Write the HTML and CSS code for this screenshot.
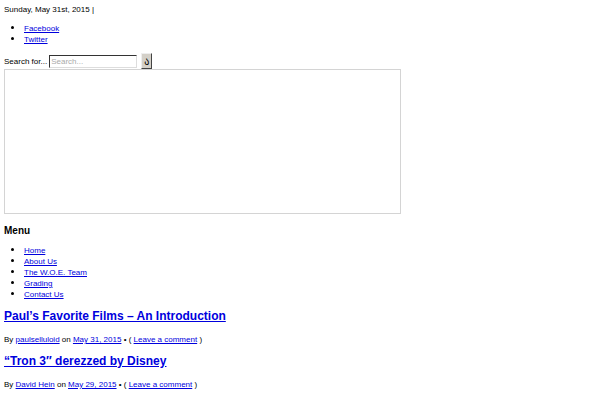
FILE: index.html
```html
<!DOCTYPE html>
<html lang="en">
<head>
  <meta charset="UTF-8"/>
  <title>Film Blog</title>
  <link rel="stylesheet" href="styles.css">
</head>

<body>
<header>
  <div class="date">Sunday, May 31st, 2015 |</div>
  <ul class="links">
    <li><a href="#">Facebook</a></li>
    <li><a href="#">Twitter</a></li>
  </ul>
  <form class="search-form">
    <label for="search">Search for...</label>
    <input class="search-field" id="search" type="text" placeholder="Search..."/>
    <button class="search-btn" type="submit">ა</button>
  </form>
  <div class="banner"></div>
</header>

<nav>
  <h3 class="menu-title">Menu</h3>
  <ul class="links">
    <li><a href="#">Home</a></li>
    <li><a href="#">About Us</a></li>
    <li><a href="#">The W.O.E. Team</a></li>
    <li><a href="#">Grading</a></li>
    <li><a href="#">Contact Us</a></li>
  </ul>
</nav>

<main>
  <article class="post">
    <h2 class="post-title"><a href="#">Paul’s Favorite Films – An Introduction</a></h2>
    <p class="post-meta">By <a href="#">paulselluloid</a> on <a href="#">May 31, 2015</a> • ( <a href="#">Leave a comment</a> )</p>
  </article>
  <article class="post">
    <h2 class="post-title"><a href="#">“Tron 3″ derezzed by Disney</a></h2>
    <p class="post-meta">By <a href="#">David Hein</a> on <a href="#">May 29, 2015</a> • ( <a href="#">Leave a comment</a> )</p>
  </article>
</main>
</body>
</html>
```

FILE: styles.css
```css
* {
  box-sizing: border-box;
}

body {
  background-color: #fff;
  color: #000;
  font-family: "Liberation Sans", Arial, sans-serif;
  font-size: 8px;
  line-height: 11px;
  margin: 4px;
}

a {
  color: #0000dd;
}

.links {
  line-height: 10px;
  margin: 8px 0;
  padding-left: 20px;
}

.links li::marker {
  font-size: 10px;
}

/* search */
.search-form {
  display: flex;
  align-items: center;
  gap: 2px;
}

.search-field {
  width: 88px;
  height: 13px;
  border: 1px solid;
  border-color: #333 #ddd #ddd #333;
  font: inherit;
  padding: 0 1px;
}

.search-field::placeholder {
  color: #aaa;
}

.search-btn {
  height: 16px;
  border: 1px solid;
  border-color: #eee #444 #444 #eee;
  background-color: #d4d0c8;
  color: #000;
  font-family: "DejaVu Sans", sans-serif;
  font-size: 10px;
  line-height: 11px;
  margin-left: 2px;
  padding: 0 2px;
}

.banner {
  width: 67%;
  height: 145px;
  border: 1px solid #d4d4d4;
}

.menu-title {
  font-size: 10px;
  line-height: 12px;
  margin: 11px 0 8px;
}

/* posts */
.post-title {
  font-size: 12px;
  line-height: 15px;
  margin: 9px 0;
}

.post-meta {
  margin: 10px 0 9px;
}
```
